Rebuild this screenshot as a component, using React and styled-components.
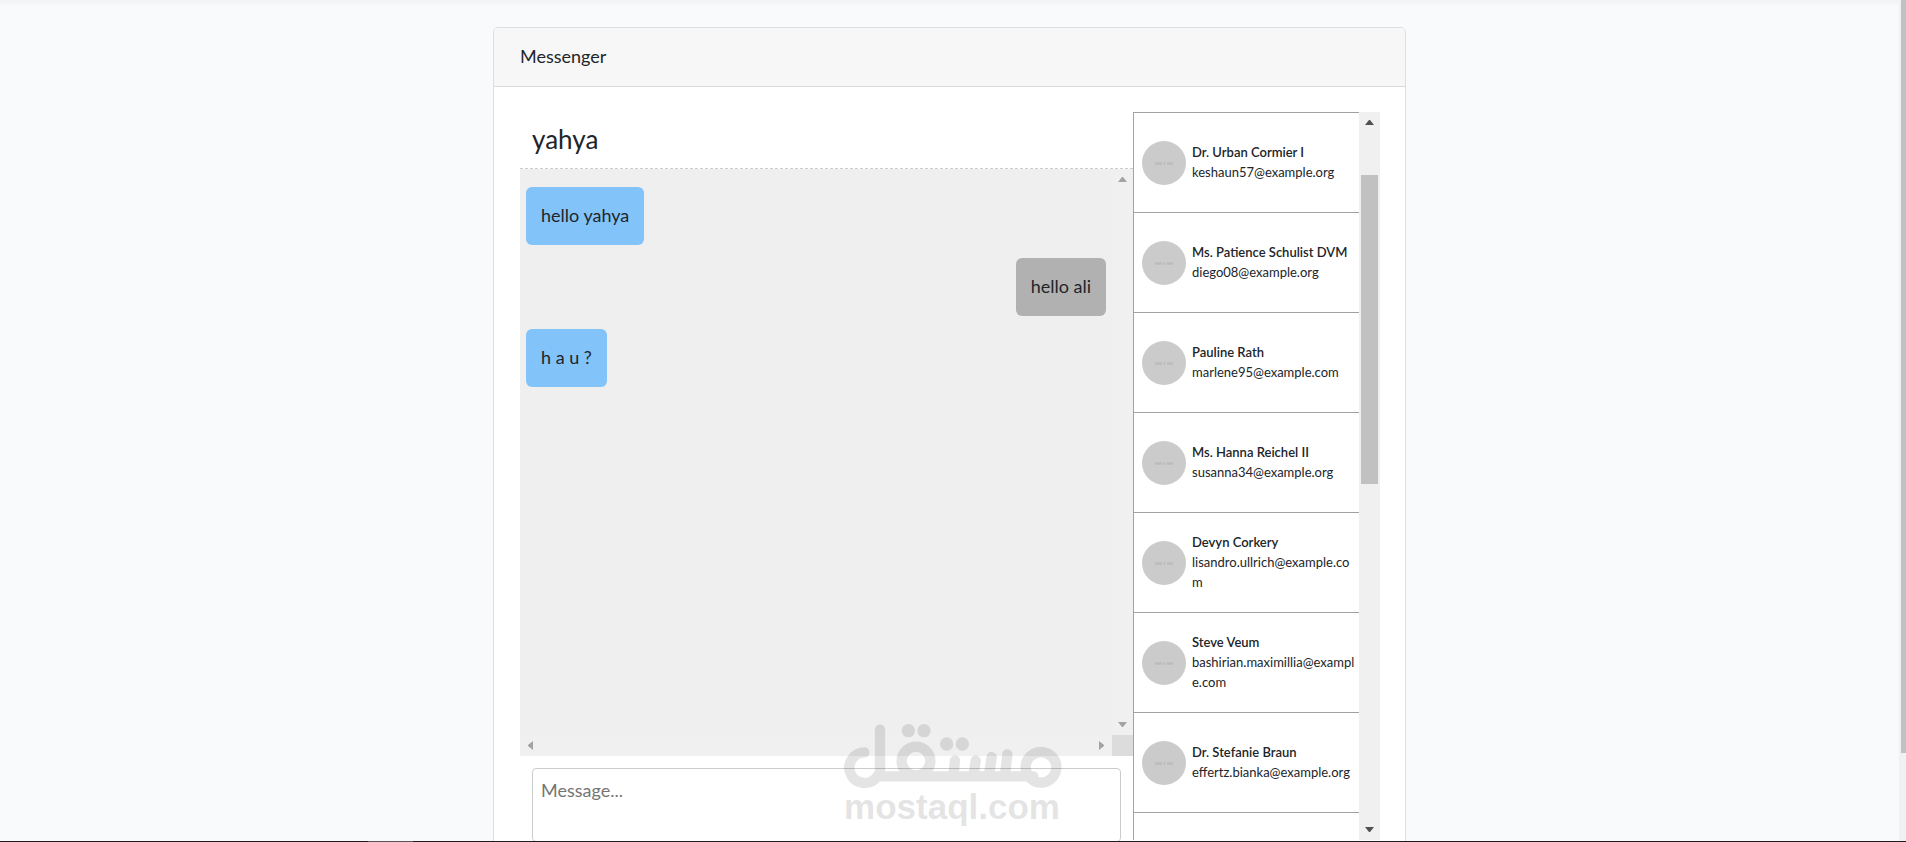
import { useState } from "react"
import styled, { createGlobalStyle } from "styled-components"

const GlobalStyle = createGlobalStyle`
  *, *::before, *::after {
    box-sizing: border-box;
  }

  body {
    margin: 0;
    overflow: hidden;
    background: #f8fafc;
    color: #212529;
    font-family: Lato, "Liberation Sans", sans-serif;
    font-size: 18px;
    line-height: 28px;
  }
`

const Screen = styled.div`
  position: relative;
  display: flex;
  flex-direction: column;
  height: 100vh;
`

const Viewport = styled.div`
  display: flex;
  flex: 1;
  min-height: 0;
  overflow: hidden;
`

const Page = styled.main`
  flex: 1;
  min-width: 0;
  padding: 27px 0;
  background: linear-gradient(#f1f3f5, #f8fafc 6px);
`

const PageScrollbar = styled.div`
  flex: none;
  width: 7px;
  padding-left: 2px;
  background: #f1f1f1;
`

const PageThumb = styled.div`
  height: calc(100% - 88px);
  background: #c1c1c1;
`

const Taskbar = styled.div`
  flex: none;
  height: 1px;
  padding-left: 368px;
  background: #1e1c22;
`

const TaskbarItem = styled.div`
  width: 45px;
  height: 1px;
  background: #56545a;
`

const Card = styled.section`
  max-width: 913px;
  margin: 0 auto;
  border: 1px solid #dcdfe2;
  border-radius: 5px;
  background: #fff;
`

const CardHeader = styled.header`
  padding: 14px 26px 16px;
  border-bottom: 1px solid #d9dadb;
  border-radius: 4px 4px 0 0;
  background: #f7f7f7;
`

const CardBody = styled.div`
  display: flex;
  padding: 25px 25px 25px 26px;
`

const Chat = styled.div`
  flex: 1;
  min-width: 0;
`

const ChatTitle = styled.h2`
  margin: 0;
  padding: 13px 12px 15px;
  border-bottom: 1px dashed #cccccc;
  font-size: 26px;
  font-weight: 400;
  line-height: 28px;
`

const ChatWindow = styled.div`
  display: grid;
  grid-template-columns: 1fr 21px;
  grid-template-rows: 566px 21px;
`

const Messages = styled.div`
  display: flex;
  flex-direction: column;
  align-items: flex-start;
  gap: 13px;
  padding: 18px 6px;
  background: #efefef;
`

const Bubble = styled.div`
  align-self: ${props => props.$mine ? "flex-start" : "flex-end"};
  padding: 14px 15px 16px;
  border-radius: 6px;
  background: ${props => props.$mine ? "#82c3f9" : "#b1b1b1"};
`

const Scrollbar = styled.div`
  display: flex;
  flex: none;
  flex-direction: ${props => props.$horizontal ? "row" : "column"};
  width: ${props => props.$horizontal ? "auto" : "21px"};
  background: #f0f0f0;
  color: ${props => props.$enabled ? "#505050" : "#a3a3a3"};
`

const ArrowBox = styled.div`
  display: flex;
  flex: none;
  align-items: center;
  justify-content: center;
  width: 21px;
  height: 21px;
`

const Track = styled.div`
  flex: 1;
  padding: 42px 2px 0;
`

const Thumb = styled.div`
  height: 309px;
  background: #c1c1c1;
`

const ScrollCorner = styled.div`
  background: #dcdcdc;
`

const Composer = styled.div`
  padding: 12px 12px 0;
`

const MessageInput = styled.textarea`
  display: block;
  width: 100%;
  height: 74px;
  padding: 7px 8px;
  border: 1px solid #cccccc;
  border-radius: 4px;
  background: #fff;
  color: inherit;
  font: inherit;
  resize: none;

  &::placeholder {
    color: #757575;
    opacity: 1;
  }
`

const Contacts = styled.aside`
  display: flex;
  flex: none;
  width: 247px;
  height: 728px;
`

const ContactList = styled.ul`
  flex: 1;
  min-width: 0;
  margin: 0;
  padding: 0;
  overflow: hidden;
  border-left: 1px solid #a2a2a2;
  list-style: none;
`

const ContactLink = styled.a`
  display: flex;
  align-items: center;
  gap: 6px;
  height: 100px;
  padding: 0 2px 0 8px;
  border-top: 1px solid #a2a2a2;
  color: inherit;
  font-size: 13px;
  line-height: 20px;
  text-decoration: none;
`

const ContactText = styled.div`
  flex: 1;
  min-width: 0;
  padding-bottom: 2px;
`

const ContactName = styled.div`
  font-weight: 600;
`

const ContactEmail = styled.div`
  word-break: break-all;
`

const AvatarImage = styled.svg`
  flex: none;
  width: 44px;
  height: 44px;
`

const Watermark = styled.div`
  position: absolute;
  right: 2px;
  bottom: 18px;
  left: 0;
  display: flex;
  flex-direction: column;
  align-items: center;
  opacity: 0.1;
  color: #000;
  font-size: 35px;
  font-weight: 700;
  line-height: 34px;
  font-family: "Liberation Sans", Arial, sans-serif;
  pointer-events: none;
`

const WatermarkLogo = styled.svg`
  width: 220px;
  height: 70px;
`

const messages = [
  { id: 1, text: "hello yahya", mine: true },
  { id: 2, text: "hello ali", mine: false },
  { id: 3, text: "h a u ?", mine: true },
]

const contacts = [
  { name: "Dr. Urban Cormier I", email: "keshaun57@example.org" },
  { name: "Ms. Patience Schulist DVM", email: "diego08@example.org" },
  { name: "Pauline Rath", email: "marlene95@example.com" },
  { name: "Ms. Hanna Reichel II", email: "susanna34@example.org" },
  { name: "Devyn Corkery", email: "lisandro.ullrich@example.com" },
  { name: "Steve Veum", email: "bashirian.maximillia@example.com" },
  { name: "Dr. Stefanie Braun", email: "effertz.bianka@example.org" },
]

const arrows = {
  up: "0,5 9,5 5,0 4,0",
  down: "0,0 9,0 5,5 4,5",
  left: "5,0 5,9 0,5 0,4",
  right: "0,0 0,9 5,5 5,4",
}

const Arrow = ({ direction }) => {
  const vertical = direction === "up" || direction === "down"
  return (
    <ArrowBox>
      <svg width={vertical ? 9 : 5} height={vertical ? 5 : 9} fill="currentColor">
        <polygon points={arrows[direction]}/>
      </svg>
    </ArrowBox>
  )
}

const Avatar = () => (
  <AvatarImage viewBox="0 0 44 44" aria-hidden="true">
    <circle cx="22" cy="22" r="22" fill="#cbcbcb"/>
    <path d="M13 22.5h7M21.5 22.5h2M25 22.5h6" stroke="#bcbcbc" strokeWidth="2.5"/>
  </AvatarImage>
)

function App() {

  const [ draft, setDraft ] = useState("")

  return (
    <Screen>
      <GlobalStyle/>
      <Viewport>
        <Page>
          <Card>
            <CardHeader>Messenger</CardHeader>
            <CardBody>
              <Chat>
                <ChatTitle>yahya</ChatTitle>
                <ChatWindow>
                  <Messages>
                    {messages.map(message => (
                      <Bubble key={message.id} $mine={message.mine}>{message.text}</Bubble>
                    ))}
                  </Messages>
                  <Scrollbar aria-hidden="true">
                    <Arrow direction="up"/>
                    <Track/>
                    <Arrow direction="down"/>
                  </Scrollbar>
                  <Scrollbar $horizontal aria-hidden="true">
                    <Arrow direction="left"/>
                    <Track/>
                    <Arrow direction="right"/>
                  </Scrollbar>
                  <ScrollCorner/>
                </ChatWindow>
                <Composer>
                  <MessageInput
                    aria-label="Message..."
                    placeholder="Message..."
                    value={draft}
                    onChange={event => setDraft(event.target.value)}
                  />
                </Composer>
              </Chat>
              <Contacts>
                <ContactList>
                  {contacts.map(contact => (
                    <li key={contact.email}>
                      <ContactLink href="#">
                        <Avatar/>
                        <ContactText>
                          <ContactName>{contact.name}</ContactName>
                          <ContactEmail>{contact.email}</ContactEmail>
                        </ContactText>
                      </ContactLink>
                    </li>
                  ))}
                  <li><ContactLink as="div"/></li>
                </ContactList>
                <Scrollbar $enabled aria-hidden="true">
                  <Arrow direction="up"/>
                  <Track><Thumb/></Track>
                  <Arrow direction="down"/>
                </Scrollbar>
              </Contacts>
            </CardBody>
          </Card>
        </Page>
        <PageScrollbar aria-hidden="true"><PageThumb/></PageScrollbar>
      </Viewport>
      <Taskbar><TaskbarItem/></Taskbar>
      <Watermark>
        <WatermarkLogo viewBox="66 60 660 210" fill="none" stroke="currentColor" strokeWidth="31" strokeLinecap="round" aria-hidden="true">
          <path d="M133 157A46 46 0 1 0 172 229H640"/>
          <path d="M180 88V215"/>
          <circle cx="288" cy="183" r="43"/>
          <circle cx="663" cy="202" r="46"/>
          <path d="M405 182L401 218M467 182L462 218M515 171L508 218M562 163L556 218"/>
          <g fill="currentColor" stroke="none">
            <circle cx="265" cy="92" r="20"/>
            <circle cx="312" cy="92" r="20"/>
            <circle cx="380" cy="132" r="20"/>
            <circle cx="427" cy="132" r="20"/>
          </g>
        </WatermarkLogo>
        <span>mostaql.com</span>
      </Watermark>
    </Screen>
  )
}

export default App
